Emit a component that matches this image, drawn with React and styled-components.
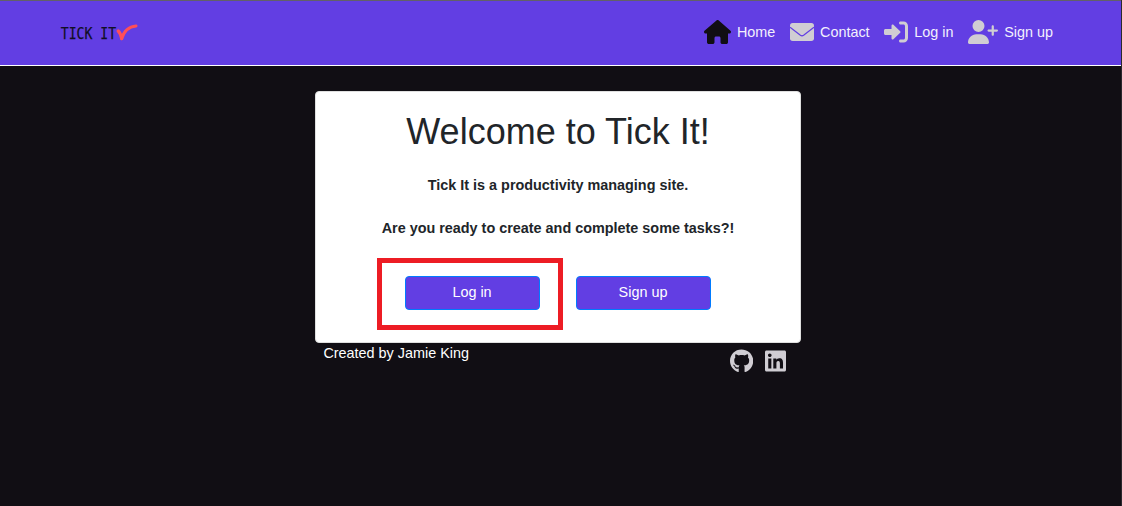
import React from "react";
import styled, { createGlobalStyle } from "styled-components";
import { FaHouse, FaUserPlus, FaGithub, FaLinkedin } from "react-icons/fa6";

const GlobalStyle = createGlobalStyle`
  *, *::before, *::after { box-sizing: border-box; }
  body {
    margin: 0;
    background: #110e14;
    color: #fff;
    font-family: "Liberation Sans", Arial, sans-serif;
    font-size: 14.4px;
    line-height: 21.6px;
  }
`;

const Page = styled.div`
  height: 506px;
  overflow: hidden;
  border-right: 1px solid #2b292e;
`;

const Navbar = styled.header`
  display: flex;
  align-items: center;
  justify-content: space-between;
  height: 66px;
  padding: 0 68px 1px 60px;
  background: #623ee3;
  border-top: 1px solid #626068;
  border-bottom: 1px solid #fff;
`;

const Brand = styled.a`
  display: flex;
  align-items: center;
  height: 24px;
`;

const BrandName = styled.span`
  width: 56px;
  padding: 2px 0 0 1px;
  font-family: "DejaVu Sans Mono", monospace;
  font-size: 16px;
  line-height: 24px;
  white-space: nowrap;
  color: #110e24;
  -webkit-text-stroke: 0.25px #110e24;
  transform: scaleX(0.82);
  transform-origin: left center;
`;

const Tick = styled.svg`
  width: 22px;
  height: 18px;
  fill: none;
  stroke: #ff4f57;
  stroke-linecap: round;
  stroke-linejoin: round;
`;

const Nav = styled.nav`
  display: flex;
  gap: 14.7px;
`;

const NavLink = styled.a`
  display: flex;
  align-items: center;
  gap: 6px;
  color: #f3f0fd;

  svg {
    width: ${(p) => p.$iconWidth}px;
    height: 24px;
    margin-bottom: 1.5px;
    fill: currentColor;
    color: ${(p) => (p.$active ? "#110e14" : "#d0cdd3")};
  }
`;

const Main = styled.main`
  width: 486px;
  margin: 25px 0 0 315px;
`;

const Card = styled.section`
  display: flex;
  flex-direction: column;
  align-items: center;
  height: 252px;
  padding-top: 18px;
  background: #fff;
  border: 1px solid #dfdfdf;
  border-radius: 4px;
  color: #212529;
`;

const Title = styled.h1`
  margin: 0 0 24px;
  font-size: 36px;
  font-weight: 400;
  line-height: 43px;
`;

const Lead = styled.p`
  margin: 0 0 26px;
  font-weight: 700;
  font-size: 14.4px;
  line-height: 17px;
`;

const Actions = styled.div`
  display: flex;
  gap: 36px;
  margin-top: 13px;
`;

const ActionSlot = styled.div`
  position: relative;
`;

const Button = styled.button`
  display: block;
  width: 135px;
  height: 34px;
  padding: 0 1px 1px 0;
  border: 1px solid #007bff;
  border-radius: 4px;
  background: #623ee3;
  color: #fff;
  font: inherit;
`;

const Highlight = styled.div`
  position: absolute;
  top: -18px;
  left: -28px;
  width: 186px;
  height: 72px;
  border: 5px solid #ed1c24;
  pointer-events: none;
`;

const Footer = styled.footer`
  display: flex;
  justify-content: space-between;
  padding: 0 15px 0 8.4px;
`;

const Social = styled.div`
  display: flex;
  gap: 12px;
  padding-top: 6px;
  color: #d0cdd3;
`;

const GithubIcon = styled(FaGithub)`
  width: 23.25px;
  height: 24px;
`;

const LinkedinIcon = styled(FaLinkedin)`
  width: 21px;
  height: 24px;
`;

const EnvelopeIcon = () => (
  <svg viewBox="0 0 512 512">
    <rect y="64" width="512" height="384" rx="58" />
    <path
      d="M0 156L222 326Q256 350 290 326L512 156"
      fill="none"
      stroke="#623ee3"
      strokeWidth="27"
    />
  </svg>
);

const LoginIcon = () => (
  <svg viewBox="0 0 512 512">
    <path d="M344.7 238.5l-144.1-136C193.7 95.97 183.4 94.17 174.6 97.95C165.8 101.8 160.1 110.4 160.1 120V192H32.02C14.33 192 0 206.3 0 224v64c0 17.68 14.33 32 32.02 32h128.1v72c0 9.578 5.707 18.25 14.51 22.05c8.803 3.781 19.03 1.984 26-4.594l144.1-136C354.3 264.4 354.3 247.6 344.7 238.5zM416 32h-64c-17.67 0-32 14.33-32 32s14.33 32 32 32h64c17.67 0 32 14.33 32 32v256c0 17.67-14.33 32-32 32h-64c-17.67 0-32 14.33-32 32s14.33 32 32 32h64c53.02 0 96-42.98 96-96V128C512 74.98 469 32 416 32z" />
  </svg>
);

export default function App() {
  return (
    <Page>
      <GlobalStyle />
      <Navbar>
        <Brand>
          <BrandName>TICK IT</BrandName>
          <Tick viewBox="0 0 22 18">
            <path d="M2.2 7C3.8 8.5 5 11 5.7 14.6" strokeWidth="3.2" />
            <path d="M5.7 14.6C7.5 8.5 12 2.6 20 1.9" strokeWidth="3" />
          </Tick>
        </Brand>
        <Nav>
          <NavLink $active $iconWidth={27}><FaHouse />Home</NavLink>
          <NavLink $iconWidth={24}><EnvelopeIcon />Contact</NavLink>
          <NavLink $iconWidth={24}><LoginIcon />Log in</NavLink>
          <NavLink $iconWidth={30}><FaUserPlus />Sign up</NavLink>
        </Nav>
      </Navbar>
      <Main>
        <Card>
          <Title>Welcome to Tick It!</Title>
          <Lead>Tick It is a productivity managing site.</Lead>
          <Lead>Are you ready to create and complete some tasks?!</Lead>
          <Actions>
            <ActionSlot>
              <Button>Log in</Button>
              <Highlight />
            </ActionSlot>
            <ActionSlot>
              <Button>Sign up</Button>
            </ActionSlot>
          </Actions>
        </Card>
        <Footer>
          <span>Created by Jamie King</span>
          <Social>
            <GithubIcon />
            <LinkedinIcon />
          </Social>
        </Footer>
      </Main>
    </Page>
  );
}
